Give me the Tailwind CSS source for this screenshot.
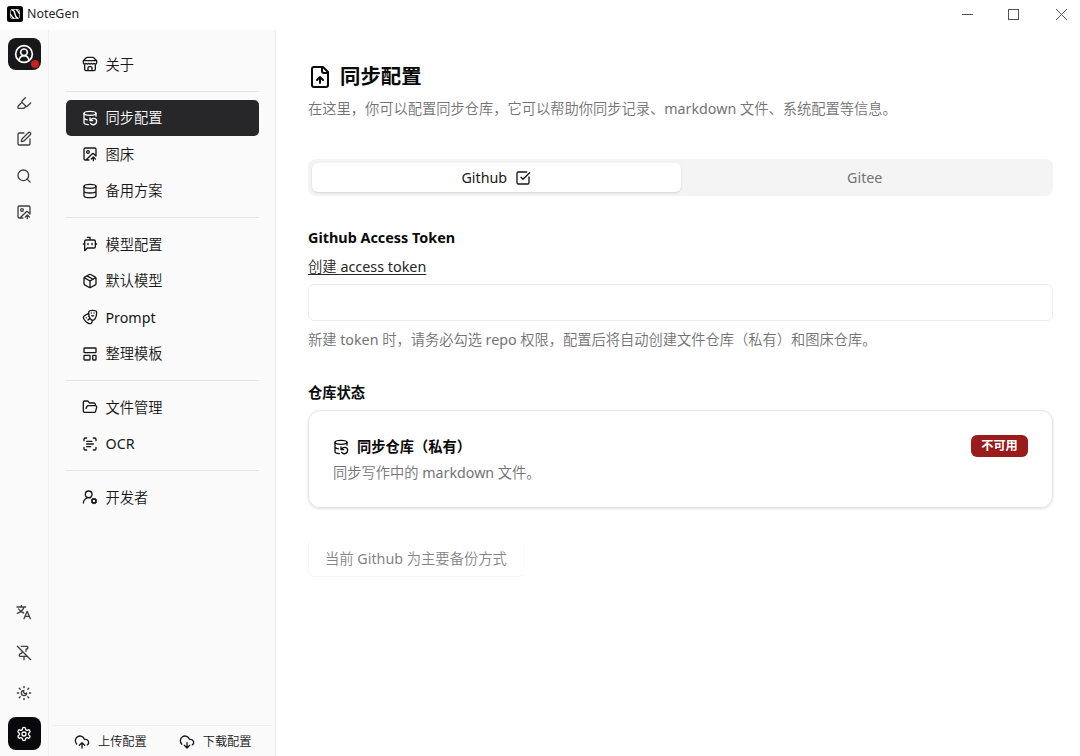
<!DOCTYPE html>
<html lang="zh-CN">
<head>
<meta charset="utf-8">
<title>NoteGen</title>
<script src="https://cdn.jsdelivr.net/npm/@tailwindcss/browser@4"></script>
</head>
<body class="w-[1080px] h-[756px] overflow-hidden bg-white text-neutral-950 font-['Noto_Sans','Noto_Sans_CJK_SC',sans-serif] text-[14.25px] flex flex-col [&_b]:font-normal">
<svg class="hidden">
  <symbol id="store" viewBox="0 0 24 24"><path d="m2 7 4.41-4.41A2 2 0 0 1 7.83 2h8.34a2 2 0 0 1 1.42.59L22 7M4 12v8a2 2 0 0 0 2 2h12a2 2 0 0 0 2-2v-8M15 22v-4a2 2 0 0 0-2-2h-2a2 2 0 0 0-2 2v4M2 7h20M22 7v3a2 2 0 0 1-2 2a2.7 2.7 0 0 1-1.59-.63.7.7 0 0 0-.82 0A2.7 2.7 0 0 1 16 12a2.7 2.7 0 0 1-1.59-.63.7.7 0 0 0-.82 0A2.7 2.7 0 0 1 12 12a2.7 2.7 0 0 1-1.59-.63.7.7 0 0 0-.82 0A2.7 2.7 0 0 1 8 12a2.7 2.7 0 0 1-1.59-.63.7.7 0 0 0-.82 0A2.7 2.7 0 0 1 4 12a2 2 0 0 1-2-2V7"/></symbol>
  <symbol id="backup" viewBox="0 0 24 24"><ellipse cx="12" cy="5" rx="9" ry="3"/><path d="M3 12a9 3 0 0 0 5 2.69M21 9.3V5M3 5v14a9 3 0 0 0 6.47 2.88M12 12v4h4M13 20a5 5 0 0 0 9-3 4.5 4.5 0 0 0-4.5-4.5c-1.33 0-2.54.54-3.41 1.41L12 16"/></symbol>
  <symbol id="imgup" viewBox="0 0 24 24"><path d="M10.3 21H5a2 2 0 0 1-2-2V5a2 2 0 0 1 2-2h14a2 2 0 0 1 2 2v10l-3.1-3.1a2 2 0 0 0-2.814.014L6 21M14 19.5l3-3 3 3M17 22v-5.5"/><circle cx="9" cy="9" r="2"/></symbol>
  <symbol id="db" viewBox="0 0 24 24"><ellipse cx="12" cy="5" rx="9" ry="3"/><path d="M3 5v14a9 3 0 0 0 18 0V5M3 12a9 3 0 0 0 18 0"/></symbol>
  <symbol id="bot" viewBox="0 0 24 24"><path d="M12 6V2H8M8 18l-4 4V8a2 2 0 0 1 2-2h12a2 2 0 0 1 2 2v8a2 2 0 0 1-2 2ZM2 12h2M9 11v2M15 11v2M20 12h2"/></symbol>
  <symbol id="package" viewBox="0 0 24 24"><path d="M11 21.73a2 2 0 0 0 2 0l7-4A2 2 0 0 0 21 16V8a2 2 0 0 0-1-1.73l-7-4a2 2 0 0 0-2 0l-7 4A2 2 0 0 0 3 8v8a2 2 0 0 0 1 1.73zM12 22V12M3.29 7 12 12l8.71-5M7.5 4.27l9 5.15"/></symbol>
  <symbol id="drama" viewBox="0 0 24 24"><path d="M10 11h.01M14 6h.01M18 6h.01M6.5 13.1h.01M22 5c0 9-4 12-6 12s-6-3-6-12c0-2 2-3 6-3s6 1 6 3M17.4 9.9c-.8.8-2 .8-2.8 0M10.1 7.1C9 7.2 7.7 7.7 6 8.6c-3.5 2-4.7 3.9-3.7 5.6 4.5 7.8 9.5 8.4 11.2 7.4.9-.5 1.9-2.1 1.9-4.7M9.1 16.5c.3-1.1 1.4-1.7 2.4-1.4"/></symbol>
  <symbol id="template" viewBox="0 0 24 24"><rect width="18" height="7" x="3" y="3" rx="1"/><rect width="9" height="7" x="3" y="14" rx="1"/><rect width="5" height="7" x="16" y="14" rx="1"/></symbol>
  <symbol id="folder" viewBox="0 0 24 24"><path d="m6 14 1.5-2.9A2 2 0 0 1 9.24 10H20a2 2 0 0 1 1.94 2.5l-1.54 6a2 2 0 0 1-1.95 1.5H4a2 2 0 0 1-2-2V5a2 2 0 0 1 2-2h3.9a2 2 0 0 1 1.69.9l.81 1.2a2 2 0 0 0 1.67.9H18a2 2 0 0 1 2 2v2"/></symbol>
  <symbol id="scan" viewBox="0 0 24 24"><path d="M3 7V5a2 2 0 0 1 2-2h2M17 3h2a2 2 0 0 1 2 2v2M21 17v2a2 2 0 0 1-2 2h-2M7 21H5a2 2 0 0 1-2-2v-2M7 8h8M7 12h10M7 16h6"/></symbol>
  <symbol id="usercog" viewBox="0 0 24 24"><circle cx="10" cy="8" r="5"/><path d="M2 21a8 8 0 0 1 10.434-7.62"/><circle cx="18" cy="18" r="3"/><path d="m14.305 19.53.923-.382M15.228 16.852l-.923-.383M16.852 15.228l-.383-.923M16.852 20.772l-.383.924M19.148 15.228l.383-.923M19.53 21.696l-.382-.924M20.772 16.852l.924-.383M20.772 19.148l.924.383"/></symbol>
  <symbol id="highlighter" viewBox="0 0 24 24"><path d="m9 11-6 6v3h9l3-3M22 12l-4.6 4.6a2 2 0 0 1-2.8 0l-5.2-5.2a2 2 0 0 1 0-2.8L14 4"/></symbol>
  <symbol id="pen" viewBox="0 0 24 24"><path d="M12 3H5a2 2 0 0 0-2 2v14a2 2 0 0 0 2 2h14a2 2 0 0 0 2-2v-7M18.375 2.625a1 1 0 0 1 3 3l-9.013 9.014a2 2 0 0 1-.853.505l-2.873.84a.5.5 0 0 1-.62-.62l.84-2.873a2 2 0 0 1 .506-.852z"/></symbol>
  <symbol id="search" viewBox="0 0 24 24"><circle cx="11" cy="11" r="8"/><path d="m21 21-4.3-4.3"/></symbol>
  <symbol id="user" viewBox="0 0 24 24"><path d="M18 20a6 6 0 0 0-12 0"/><circle cx="12" cy="10" r="4"/><circle cx="12" cy="12" r="10"/></symbol>
  <symbol id="translate" viewBox="0 0 24 24"><path d="M1.500 4.500h13M8 2v2.500M4 7.500c1.500 3 4.500 5 7.500 6M12 4.500C11 9 7 12 2 14M12 22l4.800-11 4.800 11M13.500 18.500h6.600"/></symbol>
  <symbol id="pinoff" viewBox="0 0 24 24"><path d="M12 17v5M15 9.340V7a1 1 0 0 1 1-1 2 2 0 0 0 0-4H7.890M2 2l20 20M9 9v1.760a2 2 0 0 1-1.110 1.790l-1.780.9A2 2 0 0 0 5 15.240V16a1 1 0 0 0 1 1h11"/></symbol>
  <symbol id="sunmoon" viewBox="0 0 24 24"><path d="M12 8a2.830 2.830 0 0 0 4 4 4 4 0 1 1-4-4M12 2v2M12 20v2M4.900 4.900l1.400 1.400M17.700 17.700l1.400 1.400M2 12h2M20 12h2M6.300 17.700l-1.400 1.400M19.100 4.900l-1.400 1.400"/></symbol>
  <symbol id="settings" viewBox="0 0 24 24"><path d="M12.220 2h-.44a2 2 0 0 0-2 2v.18a2 2 0 0 1-1 1.730l-.43.25a2 2 0 0 1-2 0l-.15-.08a2 2 0 0 0-2.730.73l-.22.38a2 2 0 0 0 .73 2.730l.15.1a2 2 0 0 1 1 1.720v.51a2 2 0 0 1-1 1.740l-.15.09a2 2 0 0 0-.73 2.730l.22.38a2 2 0 0 0 2.730.73l.15-.08a2 2 0 0 1 2 0l.43.25a2 2 0 0 1 1 1.730V20a2 2 0 0 0 2 2h.44a2 2 0 0 0 2-2v-.18a2 2 0 0 1 1-1.730l.43-.25a2 2 0 0 1 2 0l.15.08a2 2 0 0 0 2.730-.73l.22-.39a2 2 0 0 0-.73-2.730l-.15-.08a2 2 0 0 1-1-1.740v-.5a2 2 0 0 1 1-1.740l.15-.09a2 2 0 0 0 .73-2.730l-.22-.38a2 2 0 0 0-2.730-.73l-.15.08a2 2 0 0 1-2 0l-.43-.25a2 2 0 0 1-1-1.730V4a2 2 0 0 0-2-2z"/><circle cx="12" cy="12" r="3"/></symbol>
  <symbol id="cloudup" viewBox="0 0 24 24"><path d="M12 13v8M4 14.899A7 7 0 1 1 15.710 8h1.790a4.500 4.500 0 0 1 2.500 8.242M8 17l4-4 4 4"/></symbol>
  <symbol id="clouddown" viewBox="0 0 24 24"><path d="M12 13v8l-4-4M12 21l4-4M4.393 15.269A7 7 0 1 1 15.710 8h1.790a4.500 4.500 0 0 1 2.436 8.284"/></symbol>
  <symbol id="fileup" viewBox="0 0 24 24"><path d="M15 2H6a2 2 0 0 0-2 2v16a2 2 0 0 0 2 2h12a2 2 0 0 0 2-2V7ZM14 2v4a2 2 0 0 0 2 2h4M12 12v6M15 15l-3-3-3 3"/></symbol>
  <symbol id="check" viewBox="0 0 24 24"><path d="M21 10.500V19a2 2 0 0 1-2 2H5a2 2 0 0 1-2-2V5a2 2 0 0 1 2-2h12.500M9 11l3 3L22 4"/></symbol>
</svg>

<header class="h-[30px] shrink-0 flex items-center justify-between pl-[7px] pr-[13px]">
  <div class="flex items-center gap-1 -mt-[2px]">
    <svg class="size-4" viewBox="0 0 16 16"><rect width="16" height="16" rx="2.500" fill="#050505"/><g fill="none" stroke="#fff" stroke-linecap="round"><rect x="3.500" y="3.500" width="9" height="9" rx="1.500" stroke-width=".8" stroke-opacity=".8"/><path stroke-width="1.300" d="M5.500 4C9 4.500 7 11.500 10.500 12M9.500 4C11.500 4.500 11 7 12.500 7.500M3.500 8.500C5 9 4.500 11.500 6.500 12"/></g></svg>
    <span class="text-[12.400px] text-neutral-800">NoteGen</span>
  </div>
  <div class="flex items-center gap-[35px] text-neutral-600 -mt-[2px]">
    <svg class="w-[11px] h-[11px]" viewBox="0 0 11 11" fill="none" stroke="currentColor"><path d="M0 5.500h11"/></svg>
    <svg class="w-[11px] h-[11px]" viewBox="0 0 11 11" fill="none" stroke="currentColor"><rect x=".5" y=".5" width="10" height="10"/></svg>
    <svg class="w-[11px] h-[11px] ml-[2px]" viewBox="0 0 11 11" fill="none" stroke="currentColor"><path d="m0 0 11 11M11 0 0 11"/></svg>
  </div>
</header>

<div class="flex flex-1 min-h-0">
  <nav class="w-[49px] shrink-0 bg-[#fafafa] border-r border-[#f1f1f1] flex flex-col items-center justify-between pt-2 pb-1.5 text-neutral-700 [&_svg]:fill-none [&_svg]:stroke-current [&_svg]:stroke-2 [&_svg]:[stroke-linecap:round] [&_svg]:[stroke-linejoin:round]">
    <div class="flex flex-col items-center">
      <div class="relative w-[33px] h-8 rounded-lg bg-[#18181b] text-white flex items-center justify-center mb-[14.500px]">
        <svg class="size-5"><use href="#user"/></svg>
        <span class="absolute right-[2px] bottom-[2px] size-2 rounded-full bg-[#c8201c]"></span>
      </div>
      <div class="h-[36.500px] flex items-center"><svg class="size-4"><use href="#highlighter"/></svg></div>
      <div class="h-[36.500px] flex items-center"><svg class="size-4"><use href="#pen"/></svg></div>
      <div class="h-[36.500px] flex items-center"><svg class="size-4"><use href="#search"/></svg></div>
      <div class="h-[36.500px] flex items-center"><svg class="size-4"><use href="#imgup"/></svg></div>
    </div>
    <div class="flex flex-col items-center">
      <div class="h-[40.500px] flex items-center"><svg class="size-4"><use href="#translate"/></svg></div>
      <div class="h-[40.500px] flex items-center"><svg class="size-4"><use href="#pinoff"/></svg></div>
      <div class="h-[40.500px] flex items-center"><svg class="size-4"><use href="#sunmoon"/></svg></div>
      <div class="size-[33px] mt-[3.500px] rounded-lg bg-[#09090b] text-white flex items-center justify-center"><svg class="size-4"><use href="#settings"/></svg></div>
    </div>
  </nav>

  <aside class="w-[227px] shrink-0 bg-[#fafafa] border-r border-[#ececec] flex flex-col [&_svg]:size-4 [&_svg]:shrink-0 [&_svg]:fill-none [&_svg]:stroke-current [&_svg]:stroke-2 [&_svg]:[stroke-linecap:round] [&_svg]:[stroke-linejoin:round]">
    <ul class="flex-1 pl-[16.500px] pr-4 pt-4 font-[350] text-neutral-900 [&>li]:h-[36.500px] [&>li]:flex [&>li]:items-center [&>li]:gap-2 [&>li]:pl-4 [&>li]:rounded-[5px]">
      <li><svg><use href="#store"/></svg>关于</li>
      <hr class="border-[#e4e4e7] my-2">
      <li class="bg-[#27272a] text-neutral-50"><svg><use href="#backup"/></svg>同步配置</li>
      <li><svg><use href="#imgup"/></svg>图床</li>
      <li><svg><use href="#db"/></svg>备用方案</li>
      <hr class="border-[#e4e4e7] my-2">
      <li><svg><use href="#bot"/></svg>模型配置</li>
      <li><svg><use href="#package"/></svg>默认模型</li>
      <li><svg><use href="#drama"/></svg><b>Prompt</b></li>
      <li><svg><use href="#template"/></svg>整理模板</li>
      <hr class="border-[#e4e4e7] my-2">
      <li><svg><use href="#folder"/></svg>文件管理</li>
      <li><svg><use href="#scan"/></svg><b>OCR</b></li>
      <hr class="border-[#e4e4e7] my-2">
      <li><svg><use href="#usercog"/></svg>开发者</li>
    </ul>
    <div class="h-[31px] mx-[3px] border-t border-[#eeeeef] flex items-center pt-0.5 pl-[22px] gap-8 text-[12.2px] font-[350] text-neutral-900">
      <span class="flex items-center gap-2"><svg><use href="#cloudup"/></svg>上传配置</span>
      <span class="flex items-center gap-2"><svg><use href="#clouddown"/></svg>下载配置</span>
    </div>
  </aside>

  <main class="flex-1 pl-8 pr-[27px] pt-[32px] [&_svg]:fill-none [&_svg]:stroke-current [&_svg]:stroke-2 [&_svg]:[stroke-linecap:round] [&_svg]:[stroke-linejoin:round]">
    <h1 class="h-[29px] flex items-center gap-2 text-[20.400px] font-bold"><svg class="size-6"><use href="#fileup"/></svg>同步配置</h1>
    <p class="mt-[8px] h-5 leading-5 font-[350] text-neutral-500">在这里，你可以配置同步仓库，它可以帮助你同步记录、<b>markdown</b> 文件、系统配置等信息。</p>
    <div class="mt-10 h-[37px] rounded-lg bg-[#f4f4f5] p-1 flex text-neutral-500">
      <div class="flex-1 rounded-md bg-white shadow-sm text-neutral-900 flex items-center justify-center gap-2">Github<svg class="size-4"><use href="#check"/></svg></div>
      <div class="flex-1 flex items-center justify-center">Gitee</div>
    </div>
    <h2 class="mt-8 h-5 leading-5 font-bold text-[14.380px]">Github Access Token</h2>
    <a class="block mt-[9px] h-5 leading-5 underline underline-offset-2 text-neutral-800 text-[14.350px] font-[350]">创建 <b>access token</b></a>
    <div class="mt-[7px] h-[37px] rounded-md border border-[#ededee]"></div>
    <p class="mt-[9px] h-5 leading-5 font-[350] text-neutral-500">新建 <b>token</b> 时，请务必勾选 <b>repo</b> 权限，配置后将自动创建文件仓库（私有）和图床仓库。</p>
    <h2 class="mt-[33px] h-5 leading-5 font-bold">仓库状态</h2>
    <section class="mt-[7px] h-[98px] rounded-xl border border-[#e4e4e7] shadow-sm px-6 pt-6 flex justify-between items-start">
      <div>
        <h3 class="h-[23px] flex items-center gap-2 font-bold"><svg class="size-4"><use href="#backup"/></svg>同步仓库（私有）</h3>
        <p class="mt-[5px] h-5 leading-5 font-[350] text-neutral-500">同步写作中的 <b>markdown</b> 文件。</p>
      </div>
      <span class="w-[57px] h-[22px] rounded-md bg-[#991b1b] text-white text-[12.200px] font-bold flex items-center justify-center">不可用</span>
    </section>
    <button class="mt-8 h-[37px] w-[217px] rounded-md border border-t-transparent border-[#f6f6f6] border-r-[#fbfbfb] font-[350] text-neutral-500/90 block text-[14.300px] text-left pl-4 whitespace-nowrap">当前 <b>Github</b> 为主要备份方式</button>
  </main>
</div>
</body>
</html>
